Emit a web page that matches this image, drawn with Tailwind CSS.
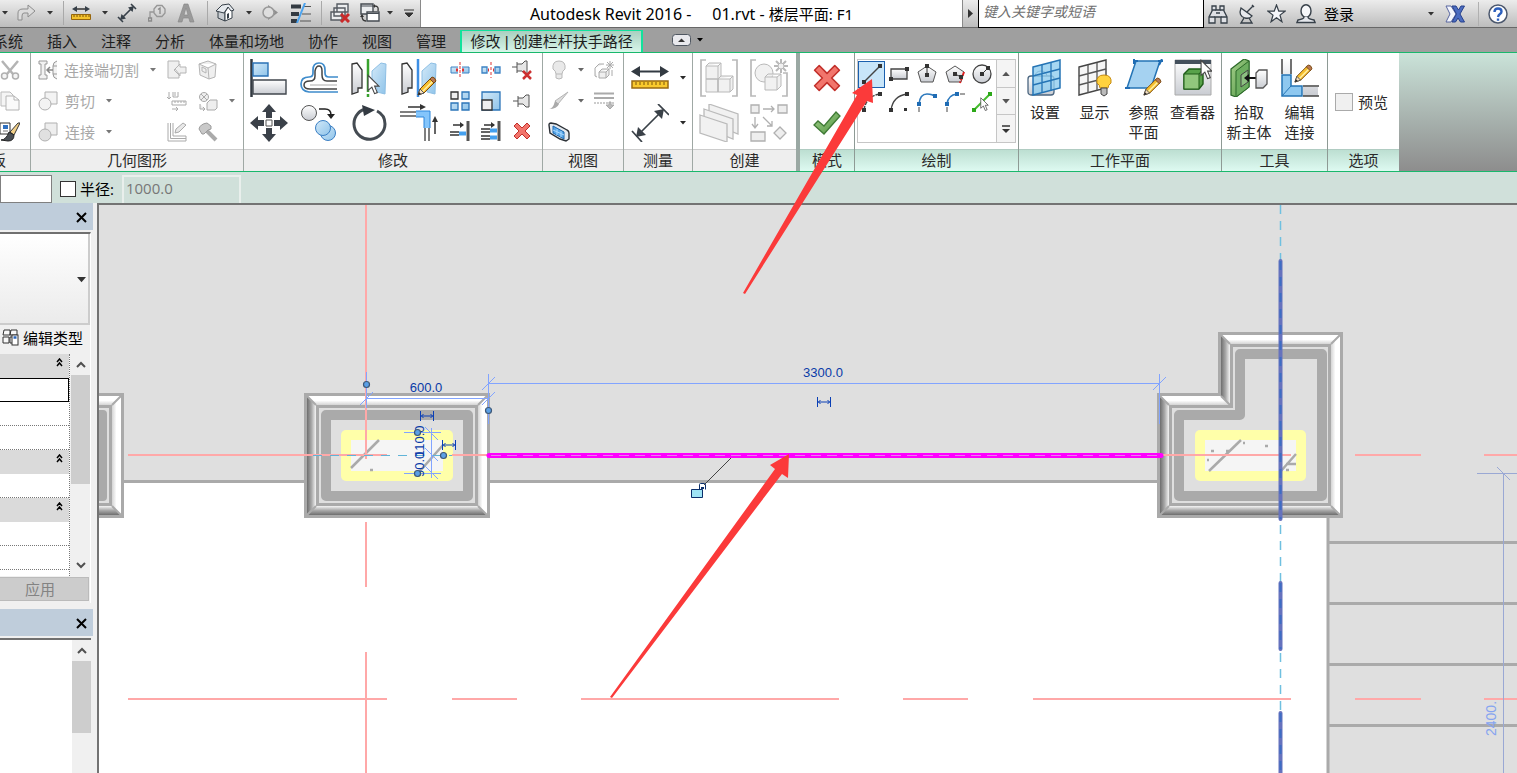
<!DOCTYPE html>
<html lang="zh-CN">
<head>
<meta charset="utf-8">
<title>Autodesk Revit 2016</title>
<script src="https://cdn.jsdelivr.net/npm/@tailwindcss/browser@4"></script>
</head>
<body class="relative flex h-screen flex-col overflow-hidden bg-[#f0f0f0] text-[15px] leading-5 text-[#1e1e1e] font-['Open_Sans','Noto_Sans_CJK_SC',sans-serif]">
<svg class="absolute size-0" aria-hidden="true">
  <defs>
    <linearGradient id="metal" x1="0" y1="0" x2="0" y2="1"><stop offset="0" stop-color="#fff"/><stop offset="1" stop-color="#c9ccd2"/></linearGradient>
    <linearGradient id="blue" x1="0" y1="0" x2="1" y2="1"><stop offset="0" stop-color="#d3e9f8"/><stop offset="1" stop-color="#8fc4ea"/></linearGradient>
    <linearGradient id="green" x1="0" y1="0" x2="1" y2="1"><stop offset="0" stop-color="#a5d08c"/><stop offset="1" stop-color="#4f9440"/></linearGradient>
    <linearGradient id="bl" x1="0" x2="1"><stop offset="0" stop-color="#6e6e6e"/><stop offset=".5" stop-color="#a8a8a8"/><stop offset="1" stop-color="#f4f4f4"/></linearGradient>
    <linearGradient id="bb" x1="0" y1="0" x2="0" y2="1"><stop offset="0" stop-color="#f4f4f4"/><stop offset=".5" stop-color="#a8a8a8"/><stop offset="1" stop-color="#6e6e6e"/></linearGradient>
    <linearGradient id="bt" x1="0" y1="0" x2="0" y2="1"><stop offset="0" stop-color="#fff"/><stop offset=".5" stop-color="#fff"/><stop offset="1" stop-color="#d4d4d4"/></linearGradient>
    <linearGradient id="br" x1="1" x2="0"><stop offset="0" stop-color="#fff"/><stop offset=".5" stop-color="#fff"/><stop offset="1" stop-color="#d4d4d4"/></linearGradient>
    <symbol id="caret" viewBox="0 0 6 4"><path d="M0 0h6L3 3.5z" fill="currentColor"/></symbol>
    <symbol id="pencil" viewBox="0 0 20 20"><path d="M1 19l2-6L14 2l4 4L7 17z" fill="#f7c02f" stroke="#7a4a10"/><path d="M5.500 15.500L16.500 4.500" stroke="#fff0a8" stroke-width="1.500"/><path d="M13 3l2-2q3 0 4 4l-2 2z" fill="#b87855" stroke="#7a4a10"/><path d="M1 19l2-6 4 4z" fill="#f5dfc0" stroke="#555"/><path d="M1 19l1-3 2 2z" fill="#222"/></symbol>
    <symbol id="cursor" viewBox="0 0 12 20"><path d="M1 1v14l3.500-3 2.500 6 2.500-1-2.500-6H11z" fill="#fff" stroke="#444"/></symbol>
    <symbol id="cross" viewBox="0 0 18 18"><path d="M4 1l5 5 5-5 3 3-5 5 5 5-3 3-5-5-5 5-3-3 5-5-5-5z" fill="#f2756c" stroke="#c22f2a" stroke-linejoin="round"/></symbol>
    <symbol id="flip" viewBox="0 0 14 10"><path d="M.5 0v10M13.500 0v10M1 5h12M3.500 3L1.500 5l2 2M10.500 3l2 2-2 2" fill="none" stroke="#0a3fb5"/></symbol>
  </defs>
</svg>

<!-- Title bar with quick access tools -->
<header class="flex h-7 shrink-0 border-b border-[#686868] bg-linear-to-b from-[#ececec] to-[#bdbdbd]">
  <div class="flex w-[421px] shrink-0 items-center border-r border-[#8a8a8a] pb-0.5 text-[#333]" role="toolbar" aria-label="快速访问工具栏">
    <button class="flex w-[10px] justify-center" aria-label="撤消列表"><svg class="h-1 w-1.5"><use href="#caret"/></svg></button>
    <button class="flex w-[34px] justify-center" aria-label="重做"><svg width="20" height="18" viewBox="0 0 20 18"><path d="M1 16V9q0-4 5-4h5V1l7 6-7 6V9H7q-2 0-2 3v4z" fill="#dcdcdc" stroke="#8d8d8d"/></svg></button>
    <button class="flex w-3 justify-center" aria-label="重做列表"><svg class="h-1 w-1.5"><use href="#caret"/></svg></button>
    <span class="h-6 w-2 border-r border-[#a9a9a9]"></span>
    <button class="flex w-[34px] justify-center" aria-label="测量"><svg width="20" height="16" viewBox="0 0 20 16"><path d="M4 4h12" stroke="#333" stroke-width="1.500"/><path d="M1 4l5-3v6zM19 4l-5-3v6z" fill="#374049"/><path d="M.5 9.500h19v5H.5z" fill="#f4c22c" stroke="#97660c"/><path d="M3 10v2M6 10v2M9 10v2M12 10v2M15 10v2M18 10v2" stroke="#7a5208"/></svg></button>
    <button class="flex w-[14px] justify-center" aria-label="测量列表"><svg class="h-1 w-1.5"><use href="#caret"/></svg></button>
    <button class="flex w-[30px] justify-center" aria-label="对齐尺寸标注"><svg width="20" height="20" viewBox="0 0 20 20"><path d="M5 15L15 5M1 14l5 5M14 1l5 5" stroke="#374049" stroke-width="1.600"/><path d="M3 17l1.500-6 4.500 4.500zM17 3l-1.500 6L11 4.500z" fill="#374049"/></svg></button>
    <button class="flex w-[30px] justify-center" aria-label="按类别标记"><svg width="18" height="18" viewBox="0 0 18 18"><path d="M6 5l3-3.500h5L17 5v4l-3 3.500H9L6 9zM6 8H2v6" fill="none" stroke="#979797" stroke-width="1.300"/><path d="M.5 14h3v3h-3zM10 5.500L12 4v6" fill="none" stroke="#8a8a8a" stroke-width="1.300"/></svg></button>
    <button class="flex w-7 justify-center" aria-label="文字"><svg width="18" height="20" viewBox="0 0 18 20"><path d="M1 19L7 1h4l6 18h-4l-1.200-4H6.200L5 19zM7 12h4L9 5z" fill="#9a9a9a" stroke="#858585" stroke-width=".6"/></svg></button>
    <span class="h-6 w-2 border-r border-[#a9a9a9]"></span>
    <button class="flex w-[34px] justify-center" aria-label="默认三维视图"><svg width="20" height="19" viewBox="0 0 20 19"><path d="M3 8v7l7 3V9z" fill="#c9ced3" stroke="#374049"/><path d="M10 9v9l7-3V7l-3-4z" fill="#fff" stroke="#374049"/><path d="M1 8l6-6 7-1 5 6-3 1-3-4-4 6z" fill="#e6eaee" stroke="#374049"/><path d="M12 11l2-1v5l-2 1z" fill="#374049"/></svg></button>
    <button class="flex w-[14px] justify-center" aria-label="三维视图列表"><svg class="h-1 w-1.5"><use href="#caret"/></svg></button>
    <button class="flex w-7 justify-center" aria-label="剖面"><svg width="18" height="17" viewBox="0 0 18 17"><path d="M7 1l10 7.500L7 16z" fill="#8f8f8f"/><circle cx="7.500" cy="8.500" r="5.500" fill="#dedede" stroke="#999" stroke-width="1.500"/></svg></button>
    <button class="flex w-[34px] justify-center" aria-label="细线"><svg width="20" height="20" viewBox="0 0 20 20"><path d="M0 3.500h10M0 11h8M0 18h6" stroke="#333a42" stroke-width="4"/><path d="M13 3.500h7M11 11h9M9 18h11" stroke="#555" stroke-width="1.200"/><path d="M14 0L6 20" stroke="#4ba3ef" stroke-width="2"/></svg></button>
    <span class="h-6 w-1 border-r border-[#a9a9a9]"></span>
    <button class="flex w-9 justify-center" aria-label="关闭隐藏窗口"><svg width="20" height="20" viewBox="0 0 20 20"><path d="M7 1h11v8H7zM4 5h11v8H4zM1 9h11v8H1z" fill="#eceef0" stroke="#555b62" stroke-width="1.400"/><path d="M11 11l8 8M19 11l-8 8" stroke="#c92a2a" stroke-width="3"/></svg></button>
    <button class="flex w-6 justify-center" aria-label="切换窗口"><svg width="20" height="20" viewBox="0 0 20 20"><path d="M1 1h12v10H1z" fill="#eceef0" stroke="#454b52" stroke-width="1.400"/><path d="M7 9h12v9H7z" fill="#fff" stroke="#454b52" stroke-width="1.400"/><path d="M1 3h12M7 10.500h12" stroke="#454b52"/><path d="M15 3q4 0 3 5M2 13q0 5 4 5" fill="none" stroke="#333" stroke-width="1.300"/><path d="M15 1v4l-2-2zM0 14l2-3 2 3z" fill="#333"/></svg></button>
    <button class="flex w-4 justify-center" aria-label="窗口列表"><svg class="h-1 w-1.5"><use href="#caret"/></svg></button>
    <button class="flex w-[22px] justify-center" aria-label="自定义快速访问工具栏"><svg width="10" height="8" viewBox="0 0 10 8"><path d="M0 1h10M1 4h8L5 8z" fill="#333" stroke="#333"/></svg></button>
  </div>
  <h1 class="flex flex-1 items-center justify-center bg-white text-[16px] whitespace-pre text-black"><span class="font-['Noto_Sans','Noto_Sans_CJK_SC',sans-serif]">Autodesk Revit 2016 -     01.rvt - <span class="text-[15px]">楼层平面: F1</span></span></h1>
  <div class="flex w-[555px] shrink-0 items-center border-l border-[#8a8a8a]">
    <button class="flex w-[15px] justify-center" aria-label="展开搜索"><svg width="5" height="9"><path d="M0 0v9l5-4.500z" fill="#333"/></svg></button>
    <input type="text" aria-label="搜索" placeholder="键入关键字或短语" class="h-7 w-[226px] border-x border-b border-black bg-white px-1 pb-1 text-[14px] italic outline-none placeholder:text-[#707070]">
    <button class="flex w-7 justify-center" aria-label="搜索"><svg width="20" height="20" viewBox="0 0 20 20"><path d="M4 2h4v4h4V2h4v5l3 6v6h-6v-6H7v6H1v-6l3-6z" fill="#dfe1e6" stroke="#374049" stroke-width="1.300"/><path d="M1 13h6M13 13h6M4 6h4M12 6h4M8 9h4" stroke="#374049" stroke-width="1.300"/></svg></button>
    <button class="flex w-[30px] justify-center" aria-label="通讯中心"><svg width="18" height="20" viewBox="0 0 18 20"><path d="M3 4q-3 8 4 10 5 1 7-2z" fill="#e8eaee" stroke="#374049" stroke-width="1.300"/><path d="M9 8l6-6M6 14l-3 5h11l-3-5M14 1l2 2" fill="none" stroke="#374049" stroke-width="1.400"/></svg></button>
    <button class="flex w-7 justify-center" aria-label="收藏夹"><svg width="19" height="19" viewBox="0 0 20 20"><path d="M10 1l2.400 6.500H19l-5.300 4.200 2 7L10 14.600 4.300 18.700l2-7L1 7.500h6.600z" fill="#f5f6fa" stroke="#374049" stroke-width="1.300"/></svg></button>
    <button class="flex items-center gap-2 pl-1.5 text-black"><svg width="20" height="20" viewBox="0 0 20 20"><ellipse cx="10" cy="7" rx="5" ry="6.300" fill="#f7f8fa" stroke="#374049" stroke-width="1.400"/><path d="M8 13q0 2-6 3l-1 2.500h18L18 16q-6-1-6-3" fill="#e5e7ec" stroke="#374049" stroke-width="1.400"/></svg><span>登录</span></button>
    <button class="ml-auto flex w-4 justify-center text-[#333]" aria-label="登录列表"><svg class="h-1 w-1.5"><use href="#caret"/></svg></button>
    <button class="flex w-8 justify-center" aria-label="Exchange 应用商店"><svg width="20" height="18" viewBox="0 0 20 18"><path d="M1 1h5l5 8-5 8H1l4-8z" fill="#f4f6fc" stroke="#5966a0"/><path d="M7 1h4l2.500 4L16 1h3.500l-4.500 8 4.500 8h-4l-2.500-4-2.500 4H7l4.500-8z" fill="#4b6cc0" stroke="#27408c"/></svg></button>
    <span class="ml-[7px] h-6 w-px bg-[#b0b0b0]"></span>
    <button class="flex w-[38px] justify-center" aria-label="帮助"><svg width="20" height="20" viewBox="0 0 20 20"><circle cx="10" cy="10" r="9" fill="#fff" stroke="#4c586e" stroke-width="1.500"/><path d="M6.500 8q0-3.500 3.500-3.500T13.500 7.500Q13.500 9 12 10t-2 3M10 14.500v2.200" fill="none" stroke="#2c5fbd" stroke-width="2.400"/></svg></button>
  </div>
</header>

<!-- Ribbon tabs -->
<nav class="flex h-[25px] shrink-0 items-end border-b border-[#19b86c] bg-[#9f9f9f]" aria-label="功能区选项卡">
  <div class="-ml-[19px] flex shrink-0 items-center">
    <button class="h-[22px] px-3 whitespace-nowrap">系统</button><button class="h-[22px] px-3 whitespace-nowrap">插入</button><button class="h-[22px] px-3 whitespace-nowrap">注释</button><button class="h-[22px] px-3 whitespace-nowrap">分析</button><button class="h-[22px] px-3 whitespace-nowrap">体量和场地</button><button class="h-[22px] px-3 whitespace-nowrap">协作</button><button class="h-[22px] px-3 whitespace-nowrap">视图</button><button class="h-[22px] px-3 whitespace-nowrap">管理</button>
  </div>
  <button class="ml-0.5 h-[22px] w-[183px] shrink-0 border-x-2 border-t border-[#12e29c] bg-linear-to-b from-[#a9cfc0] to-[#d8f6ea] whitespace-nowrap font-['Liberation_Sans','Noto_Sans_CJK_SC',sans-serif]">修改 | 创建栏杆扶手路径</button>
  <button class="mb-1.5 ml-[29px] flex items-center gap-1.5 text-black" aria-label="最小化功能区"><svg width="19" height="12" viewBox="0 0 19 12"><rect x=".5" y=".5" width="18" height="11" rx="3" fill="#e9e9ed" stroke="#4f5660"/><path d="M6 8h7L9.500 4.500z" fill="#333"/></svg><svg class="h-1 w-1.5"><use href="#caret"/></svg></button>
</nav>

<!-- Ribbon -->
<div class="flex h-[119px] shrink-0 border-b border-[#19b86c] bg-linear-to-b from-[#cae3d9] to-[#8d8d8d] text-[#2a2a2a]">
  <section class="flex w-[31px] shrink-0 flex-col border-r border-[#9fa8a4] bg-white" aria-label="剪贴板">
    <div class="grid h-24 grid-cols-[20px] grid-rows-[31px_31px_31px] place-items-center pt-px">
      <button aria-label="剪切"><svg width="20" height="20" viewBox="0 0 20 20"><path d="M2 1l11 13M18 1L7 14" stroke="#b4b4b4" stroke-width="2.500"/><circle cx="4.500" cy="16" r="3" fill="#f4f4f4" stroke="#b0b0b0" stroke-width="1.500"/><circle cx="15.500" cy="16" r="3" fill="#f4f4f4" stroke="#b0b0b0" stroke-width="1.500"/></svg></button>
      <button aria-label="复制"><svg width="20" height="20" viewBox="0 0 20 20"><path d="M1 1h9l3 3v11H1z" fill="#f5f5f5" stroke="#bbb"/><path d="M6 5h8l5 4v10H6zM14 5v4h5" fill="#fafafa" stroke="#b4b4b4"/></svg></button>
      <button aria-label="匹配类型属性"><svg width="20" height="20" viewBox="0 0 20 20"><path d="M0 1h10v11H0z" fill="#fff" stroke="#333"/><path d="M3 3h5v4H3z" fill="#2f70c0"/><path d="M3 9h5" stroke="#777"/><path d="M20 1l-6 12-4-3 8-9z" fill="#f3d18a" stroke="#333"/><path d="M1 18q5 0 8-8l5 3q0 6-6 6z" fill="#4a4f55" stroke="#222"/></svg></button>
    </div>
    <h2 class="flex h-[22px] justify-end overflow-hidden border-t border-[#ccc] bg-[#eee] pr-[24px] whitespace-nowrap">剪贴板</h2>
  </section>

  <section class="flex w-[213px] shrink-0 flex-col border-r border-[#9fa8a4] bg-white" aria-label="几何图形">
    <div class="grid h-24 grid-cols-[34px_79px_17px_32px_30px_17px] grid-rows-[31px_31px_31px] items-center justify-items-center pt-px text-[#a8a8a8]">
      <svg width="20" height="20" viewBox="0 0 20 20" fill="#f2f2f2" stroke="#999"><path d="M1 1h8v3H7v11h2v4H1v-4h2V4H1zM19 1q-4 1-4 5v8q0 4 4 5M15 6h4M15 14h4"/><path d="M9 10h6M12 7l-3 3 3 3" fill="none" stroke="#888" stroke-width="1.500"/></svg>
      <button class="-ml-px justify-self-start whitespace-nowrap">连接端切割</button>
      <button class="justify-self-start text-[#777]" aria-label="连接端切割列表"><svg class="ml-1.5 h-1 w-1.5"><use href="#caret"/></svg></button>
      <button aria-label="端部"><svg width="20" height="20" viewBox="0 0 20 20" fill="#efefef" stroke="#b5b5b5"><path d="M1 1h11v4l-4 4 4 5v4H1zM19 7h-6V4L7 10l6 6v-3h6z"/></svg></button>
      <button aria-label="面"><svg width="20" height="20" viewBox="0 0 20 20" fill="#efefef" stroke="#b5b5b5"><path d="M1 4l9-3 8 3-1 13-6 2L2 15zM1 4l9 4 8-4M10 8l1 11M4 7l4 2v4l-4-2z"/></svg></button>
      <span></span>
      <svg width="20" height="20" viewBox="0 0 20 20" fill="#f3f3f3" stroke="#b0b0b0"><path d="M7 1h12v12H7z"/><circle cx="7" cy="13" r="6"/></svg>
      <button class="flex w-full items-center gap-[11px] text-left">剪切<svg class="h-1 w-1.5 text-[#777]"><use href="#caret"/></svg></button><span></span>
      <button aria-label="屋顶连接"><svg width="20" height="20" viewBox="0 0 20 20" fill="none" stroke="#aaa"><path d="M2 1v7M0 6l2 2 2-2M6 1v5h5V1M8 1v4M5 10h14v4H5zM8 10v2M11 10v2M14 10v2M17 10v2M5 18h6M9 16l2 2-2 2"/></svg></button>
      <button aria-label="拆分面"><svg width="20" height="20" viewBox="0 0 20 20" fill="#eee" stroke="#aaa"><circle cx="6" cy="6" r="4.500"/><path d="M3 3l6 6M9 3L3 9M9 12l3-3h7v8l-2 2H9zM2 13v5h5M5 16l2 2-2 2"/></svg></button>
      <button class="text-[#777]" aria-label="拆分面列表"><svg class="h-1 w-1.5"><use href="#caret"/></svg></button>
      <svg width="20" height="20" viewBox="0 0 20 20" fill="#eee" stroke="#b0b0b0"><path d="M7 1h12v12H7z"/><circle cx="7" cy="13" r="6" fill="#e0e0e0"/></svg>
      <button class="flex w-full items-center gap-[11px] text-left">连接<svg class="h-1 w-1.5 text-[#777]"><use href="#caret"/></svg></button><span></span>
      <button aria-label="梁连接"><svg width="20" height="20" viewBox="0 0 20 20" fill="none" stroke="#aaa"><path d="M1 1v18h18v-5H6V1M3.500 1v15.500H19"/><path d="M8 11l1-4 7-6 3 2-7 7z" fill="#e8e8e8"/></svg></button>
      <button aria-label="拆除"><svg width="20" height="20" viewBox="0 0 20 20"><path d="M9 9l9 9" stroke="#aaa" stroke-width="4"/><path d="M1 7q1-5 8-6l4 3v3l-3 1-4 4H4z" fill="#c9c9c9" stroke="#9b9b9b"/></svg></button>
    </div>
    <h2 class="h-[22px] border-t border-[#ccc] bg-[#eee] text-center">几何图形</h2>
  </section>

  <section class="flex w-[299px] shrink-0 flex-col border-r border-[#9fa8a4] bg-white" aria-label="修改">
    <div class="flex h-24 pt-0.5">
      <div class="grid w-[200px] grid-cols-4 grid-rows-[45px_45px] place-items-center">
        <button aria-label="对齐"><svg width="38" height="38" viewBox="0 0 38 38"><path d="M1.500 0v38" stroke="#333a42" stroke-width="2.500"/><path d="M3 4h15v13H3z" fill="url(#blue)" stroke="#2b72b5" stroke-width="1.400"/><path d="M3 21h33v14H3z" fill="url(#metal)" stroke="#41474e" stroke-width="1.400"/></svg></button>
        <button aria-label="偏移"><svg width="38" height="38" viewBox="0 0 38 38" fill="none"><path d="M38 18h-9q-4 0-4-4v-3q0-7-6-7t-6 7v3q0 4-4 4-8 0-8 7t8 8h29" stroke="#3f8ccc" stroke-width="1.700"/><path d="M37 22H27q-5 0-5-6v-4q0-5-3-5t-4 5v5q0 5-5 5-6 0-6 4t6 4h27" stroke="#444" stroke-width="1.500"/><path d="M37 26H10" stroke="#aaa"/></svg></button>
        <button aria-label="镜像 - 拾取轴"><svg width="38" height="38" viewBox="0 0 38 38"><path d="M2 5l5-1 5 7v18H8v4l-6 2z" fill="url(#metal)" stroke="#333" stroke-width="1.300"/><path d="M36 5l-5-1-9 8v17h5v4l8 2z" fill="url(#blue)" stroke="#8ebfe4"/><path d="M18 0v33M18 35v3" stroke="#38a32e" stroke-width="2.500"/><use href="#cursor" x="17" y="15" width="13" height="22"/></svg></button>
        <button aria-label="镜像 - 绘制轴"><svg width="38" height="38" viewBox="0 0 38 38"><path d="M2 5l5-1 5 7v18H8v4l-6 2z" fill="url(#metal)" stroke="#333" stroke-width="1.300"/><path d="M36 5l-5-1-9 8v17h5v4l8 2z" fill="url(#blue)" stroke="#8ebfe4"/><path d="M18 0v38" stroke="#3e8fe4" stroke-width="2.500"/><use href="#pencil" x="17" y="17" width="20" height="20"/></svg></button>
        <button aria-label="移动"><svg width="38" height="38" viewBox="0 0 38 38"><path d="M19 0l7 8h-4v6h-6V8h-4zM19 38l7-8h-4v-6h-6v6h-4zM0 19l8-7v4h6v6H8v4zM38 19l-8-7v4h-6v6h6v4z" fill="#3b4149"/><path d="M16 16h6v6h-6z" fill="#fff" stroke="#555"/></svg></button>
        <button aria-label="复制"><svg width="38" height="38" viewBox="0 0 38 38"><circle cx="9" cy="9" r="7.500" fill="url(#metal)" stroke="#555"/><path d="M19 5h6q6 0 6 6" fill="none" stroke="#222" stroke-width="1.500"/><path d="M27 10h8l-4 5z" fill="#222"/><circle cx="28" cy="29" r="7.500" fill="url(#blue)" stroke="#3b7fc4"/><circle cx="23" cy="24" r="7.500" fill="url(#blue)" stroke="#3b7fc4"/></svg></button>
        <button aria-label="旋转"><svg width="38" height="38" viewBox="0 0 38 38"><path d="M27 7q8 4 8 13a15.500 15.500 0 1 1-20-15" fill="none" stroke="#444b52" stroke-width="3"/><path d="M12 1l13 5-11 6z" fill="#333a42"/></svg></button>
        <button aria-label="修剪/延伸为角"><svg width="38" height="38" viewBox="0 0 38 38" fill="none"><path d="M0 8h16M0 12h16M25 23v14M29 23v14" stroke="#555" stroke-width="1.500"/><path d="M16 10h11v14" stroke="#84c5fb" stroke-width="6"/><path d="M16 7h14v17M16 13h8v11" stroke="#2b86dc"/><path d="M8 3h14M35 30V16" stroke="#333" stroke-width="1.500"/><path d="M20 0l6 3-6 3zM32 18l3-6 3 6z" fill="#333"/></svg></button>
      </div>
      <div class="grid w-[94px] grid-cols-3 grid-rows-[30px_31px_30px] place-items-center">
        <button aria-label="拆分图元"><svg width="20" height="16" viewBox="0 0 20 16"><path d="M1 5h18v6H1z" fill="url(#blue)" stroke="#3c82c4"/><path d="M8 0h4v16H8z" fill="#fff"/><path d="M10 0v16" stroke="#d33" stroke-dasharray="3 1"/><path d="M6 8h2M12 8h2" stroke="#d33" stroke-width="3"/></svg></button>
        <button aria-label="用间隙拆分"><svg width="20" height="16" viewBox="0 0 20 16"><path d="M1 5h5v6H1zM14 5h5v6h-5z" fill="url(#blue)" stroke="#3c82c4" stroke-width="1.300"/><path d="M10 0v16" stroke="#d33" stroke-dasharray="3 2"/><path d="M7 8h1M12 8h1" stroke="#d33" stroke-width="3"/></svg></button>
        <button aria-label="解锁"><svg width="20" height="20" viewBox="0 0 20 20"><path d="M0 7h5M5 2v11M5 4h5l3-3h2v13h-2l-3-3H5" fill="#e6e6e6" stroke="#555"/><path d="M11 11l8 8M19 11l-8 8" stroke="#cc2f2f" stroke-width="2.500"/></svg></button>
        <button aria-label="阵列"><svg width="20" height="20" viewBox="0 0 20 20"><path d="M1 1h7v7H1z" fill="#eee" stroke="#333" stroke-width="1.300"/><path d="M12 1h7v7h-7zM1 12h7v7H1zM12 12h7v7h-7z" fill="url(#blue)" stroke="#2d76b9" stroke-width="1.300"/></svg></button>
        <button aria-label="缩放"><svg width="20" height="20" viewBox="0 0 20 20"><path d="M1 1h18v18H1z" fill="url(#blue)" stroke="#2d76b9" stroke-width="1.300"/><path d="M1 9h10v10H1z" fill="#eee" stroke="#333" stroke-width="1.300"/></svg></button>
        <button aria-label="锁定"><svg width="18" height="14" viewBox="0 0 18 14"><path d="M0 7h5M5 2v11M5 4h5l3-3h3v12h-3l-3-3H5" fill="#e6e6e6" stroke="#555"/></svg></button>
        <button aria-label="修剪/延伸单个图元"><svg width="20" height="20" viewBox="0 0 20 20" fill="none"><path d="M3 4h10M0 11h9M0 14h9" stroke="#333" stroke-width="1.300"/><path d="M10 1l4 3-4 3z" fill="#333"/><path d="M9 12.500h7" stroke="#44a0ef" stroke-width="4"/><path d="M18 0v20" stroke="#555" stroke-width="3"/></svg></button>
        <button aria-label="修剪/延伸多个图元"><svg width="20" height="20" viewBox="0 0 20 20" fill="none"><path d="M3 4h10M0 8h9M0 11h9M0 15h9M0 18h9" stroke="#333" stroke-width="1.300"/><path d="M10 1l4 3-4 3z" fill="#333"/><path d="M9 9.500h7M9 16.500h7" stroke="#44a0ef" stroke-width="4"/><path d="M18 0v20" stroke="#555" stroke-width="3"/></svg></button>
        <button aria-label="删除"><svg class="size-[18px]"><use href="#cross"/></svg></button>
      </div>
    </div>
    <h2 class="h-[22px] border-t border-[#ccc] bg-[#eee] text-center">修改</h2>
  </section>

  <section class="flex w-[81px] shrink-0 flex-col border-r border-[#9fa8a4] bg-white" aria-label="视图">
    <div class="grid h-24 grid-cols-[32px_12px_34px] grid-rows-[31px_31px_31px] place-items-center pt-px text-[#666]">
      <button aria-label="在视图中隐藏"><svg width="16" height="20" viewBox="0 0 16 20"><path d="M5 14q0-3-3-5-1-8 6-8t6 8q-3 2-3 5zM5 14v4l3 1 3-1v-4" fill="#e9e9e9" stroke="#b9b9b9"/></svg></button>
      <button aria-label="隐藏列表"><svg class="h-1 w-1.5"><use href="#caret"/></svg></button>
      <button aria-label="替换视图中的图形"><svg width="20" height="20" viewBox="0 0 20 20" fill="#efefef" stroke="#aaa"><path d="M5 12l3-3h7v6l-3 3H5zM5 12h7l3-3M12 12v6M1 8v8l2 1M1 8l4-4h5M18 10v6"/><path d="M16 1v8M12 5h8M13 2l6 6M19 2l-6 6"/></svg></button>
      <button aria-label="替换"><svg width="20" height="19" viewBox="0 0 20 19"><path d="M19 1L9 13l-3-3z" fill="#ddd" stroke="#b5b5b5"/><path d="M0 18q4 0 6-8l4 3q-2 5-10 5z" fill="#aaa"/></svg></button>
      <button aria-label="替换列表"><svg class="h-1 w-1.5"><use href="#caret"/></svg></button>
      <button aria-label="线处理"><svg width="20" height="18" viewBox="0 0 20 18"><path d="M0 1.500h20M0 6h20" stroke="#aaa" stroke-width="2"/><path d="M0 11h20" stroke="#999" stroke-dasharray="2 1"/><path d="M15 10h2v3h3l-4 4-4-4h3z" fill="#bbb" stroke="#aaa"/></svg></button>
      <button aria-label="选择框"><svg width="22" height="20" viewBox="0 0 22 20"><path d="M1 3q0-2 2-2l5 1 11 6q2 1 2 3v6l-3 2-6-2L2 11z" fill="#e3e9ef" stroke="#2a2f35" stroke-width="1.400"/><path d="M5 4l11 6v7L5 11z" fill="#55a7ea" stroke="#1e66ad"/><path d="M9 7v6M13 9v6M5 8l11 5" stroke="#aad8ff"/></svg></button>
    </div>
    <h2 class="h-[22px] border-t border-[#ccc] bg-[#eee] text-center">视图</h2>
  </section>

  <section class="flex w-[69px] shrink-0 flex-col border-r border-[#9fa8a4] bg-white" aria-label="测量">
    <div class="grid h-24 grid-cols-[51px_15px] grid-rows-[45px_45px] place-items-center pt-0.5">
      <button aria-label="测量两个参照之间的距离"><svg width="38" height="24" viewBox="0 0 38 24"><path d="M4 5.500h30" stroke="#333a42" stroke-width="2"/><path d="M0 5.500L9 0v11zM38 5.500L29 0v11z" fill="#333a42"/><path d="M1 15h36v7H1z" fill="#fac92d" stroke="#9a6a10" stroke-width="1.500"/><path d="M5 16v3M9 16v3M13 16v3M17 16v3M21 16v3M25 16v3M29 16v3M33 16v3" stroke="#7d560d"/></svg></button>
      <button aria-label="测量列表"><svg class="h-1 w-1.5"><use href="#caret"/></svg></button>
      <button aria-label="对齐尺寸标注"><svg width="38" height="38" viewBox="0 0 38 38"><path d="M8 30L30 8M1 27l10 11M27 0l11 11" stroke="#3a4148" stroke-width="1.700"/><path d="M5 33l2-10 8 8zM33 5l-2 10-8-8z" fill="#3a4148"/></svg></button>
      <button aria-label="尺寸标注列表"><svg class="h-1 w-1.5"><use href="#caret"/></svg></button>
    </div>
    <h2 class="h-[22px] border-t border-[#ccc] bg-[#eee] text-center">测量</h2>
  </section>

  <section class="flex w-[107px] shrink-0 flex-col border-r-4 border-[#9aa8a3] bg-white" aria-label="创建">
    <div class="grid h-24 grid-cols-[52px_48px] grid-rows-[45px_45px] place-items-center pt-0.5">
      <button aria-label="创建组"><svg width="38" height="38" viewBox="0 0 38 38" fill="#f1f1f1" stroke="#b9b9b9"><path d="M6 1H1v36h5M32 1h5v36h-5" fill="none" stroke-width="1.700"/><path d="M6 7l3-3h12v13l-3 3H6zM6 20h12v13H6zM18 20l3-3h12v13l-3 3H18zM6 7h12l3-3M18 7v26M18 20h12l3-3M30 20v13"/></svg></button>
      <button aria-label="创建类似实例"><svg width="38" height="38" viewBox="0 0 38 38" fill="#f1f1f1" stroke="#b9b9b9"><path d="M6 1H1v36h5M33 14h4v23h-5" fill="none" stroke-width="1.700"/><circle cx="14" cy="14" r="9"/><path d="M15 18l3-3h13v12l-4 4H15zM15 18h12l4-3M27 18v13"/><path d="M31 0v14M24 7h14M26 2l10 10M36 2L26 12" stroke-width="2"/><circle cx="31" cy="7" r="3"/></svg></button>
      <button aria-label="创建部件"><svg width="40" height="38" viewBox="0 0 40 38" fill="#f1f1f1" stroke="#bbb" stroke-width="1.300"><path d="M10 0l29 10v20L10 18z"/><path d="M5 5l29 10v20L5 23z"/><path d="M1 11l27 9v18L1 29z"/></svg></button>
      <button aria-label="创建零件"><svg width="38" height="38" viewBox="0 0 38 38" fill="#eee" stroke="#b0b0b0" stroke-width="1.300"><path d="M1 1h8v8H1zM28 1h9v8h-9zM1 28h14v9H1zM30 23l6 6-6 6-6-6z"/><path d="M13 5h11M21 2l3 3-3 3M5 13v10M2 20l3 4 3-4M13 13l9 9M22 17v5h-5" fill="none"/></svg></button>
    </div>
    <h2 class="h-[22px] border-t border-[#ccc] bg-[#eee] text-center">创建</h2>
  </section>

  <section class="flex w-[55px] shrink-0 flex-col border-r border-[#8e9a95] bg-white" aria-label="模式">
    <div class="grid h-24 grid-rows-[45px_45px] place-items-center pt-0.5">
      <button aria-label="取消编辑模式"><svg class="size-7"><use href="#cross"/></svg></button>
      <button aria-label="完成编辑模式"><svg width="28" height="24" viewBox="0 0 28 24"><path d="M1 14l4-4 6 5L23 1l4 4-16 18z" fill="url(#green)" stroke="#3f7a35" stroke-width="1.300"/></svg></button>
    </div>
    <h2 class="h-[22px] border-t border-[#b0ccc2] bg-linear-to-b from-[#bddfd2] to-[#defaf1] text-center">模式</h2>
  </section>

  <section class="flex w-[164px] shrink-0 flex-col border-r border-[#8e9a95] bg-white" aria-label="绘制">
    <div class="h-24 px-0.5 pt-1.5">
      <div class="flex h-[84px] border border-[#c6c6c6]">
        <div class="grid flex-1 grid-cols-5 grid-rows-[28px_28px] place-items-center">
          <button class="grid size-[27px] place-items-center border border-[#1a5fae] bg-[#c8e5f9]" aria-label="直线"><svg width="20" height="20" viewBox="0 0 20 20"><path d="M2 18L18 2" stroke="#444" stroke-width="1.500"/><path d="M0 16h4v4H0zM16 0h4v4h-4z" fill="#333"/></svg></button>
          <button aria-label="矩形"><svg width="20" height="16" viewBox="0 0 20 16"><path d="M2 3h16v10H2z" fill="url(#metal)" stroke="#444" stroke-width="1.300"/><path d="M0 11h4v4H0zM16 1h4v4h-4z" fill="#333"/></svg></button>
          <button aria-label="内接多边形"><svg width="20" height="20" viewBox="0 0 20 20"><path d="M10 2l9 6-3 10H4L1 8z" fill="url(#metal)" stroke="#555"/><path d="M10 3v7" stroke="#333"/><path d="M8 0h4v4H8zM8 9h4v4H8z" fill="#333"/></svg></button>
          <button aria-label="外接多边形"><svg width="20" height="20" viewBox="0 0 20 20"><path d="M10 2l9 6-3 10H4L1 8z" fill="url(#metal)" stroke="#555"/><path d="M19 8l-4 11" stroke="#e02020" stroke-width="2" stroke-dasharray="4 1"/><path d="M10 10l6 3" stroke="#333"/><path d="M8 8h4v4H8zM14 11h4v4h-4z" fill="#333"/></svg></button>
          <button aria-label="圆形"><svg width="20" height="20" viewBox="0 0 20 20"><circle cx="10" cy="10" r="9" fill="url(#metal)" stroke="#444" stroke-width="1.300"/><path d="M10 10l5-5" stroke="#333"/><path d="M8 8h4v4H8zM14 2h4v4h-4z" fill="#333"/></svg></button>
          <button aria-label="起点-终点-半径弧"><svg width="20" height="20" viewBox="0 0 20 20"><path d="M2 18Q4 4 18 2" fill="none" stroke="#444" stroke-width="1.500" stroke-dasharray="4 1"/><path d="M0 16h4v4H0zM16 0h4v4h-4zM5 5h4v4H5z" fill="#333"/></svg></button>
          <button aria-label="圆心-端点弧"><svg width="20" height="20" viewBox="0 0 20 20"><path d="M2 18Q4 4 18 2" fill="none" stroke="#444" stroke-width="1.300"/><path d="M0 16h4v4H0zM16 0h4v4h-4zM15 16h3v3h-3z" fill="#333"/></svg></button>
          <button aria-label="相切-端点弧"><svg width="20" height="20" viewBox="0 0 20 20"><path d="M2 12Q3 2 10 2q6 0 8 3" fill="none" stroke="#2d79bd" stroke-width="1.600"/><path d="M0 10h4v4H0zM16 2h4v4h-4z" fill="#1f6cb4"/><path d="M2 15v5" stroke="#444"/></svg></button>
          <button aria-label="圆角弧"><svg width="20" height="20" viewBox="0 0 20 20"><path d="M2 12Q3 3 12 2" fill="none" stroke="#2d79bd" stroke-width="1.600"/><path d="M0 10h4v4H0zM10 0h4v4h-4z" fill="#1f6cb4"/><path d="M2 15v5M15 2h5" stroke="#444"/></svg></button>
          <button aria-label="拾取线"><svg width="20" height="20" viewBox="0 0 20 20"><path d="M2 18L18 2" stroke="#44bb2d" stroke-width="2"/><path d="M0 16h4v4H0zM16 0h4v4h-4z" fill="#2ca818"/><use href="#cursor" x="8" y="5" width="9" height="15"/></svg></button>
        </div>
        <div class="flex w-[19px] flex-col divide-y divide-[#c6c6c6] border-l border-[#c6c6c6] bg-[#f4f4f4] text-[#555]">
          <button class="grid flex-1 place-items-center" aria-label="向上"><svg class="h-[5px] w-2 rotate-180"><use href="#caret"/></svg></button>
          <button class="grid flex-1 place-items-center" aria-label="向下"><svg class="h-[5px] w-2"><use href="#caret"/></svg></button>
          <button class="grid flex-1 place-items-center" aria-label="展开"><svg width="8" height="8" viewBox="0 0 8 8"><path d="M0 1h8" stroke="#333" stroke-width="1.500"/><path d="M0 4h8L4 8z" fill="#333"/></svg></button>
        </div>
      </div>
    </div>
    <h2 class="h-[22px] border-t border-[#b0ccc2] bg-linear-to-b from-[#bddfd2] to-[#defaf1] text-center">绘制</h2>
  </section>

  <section class="flex w-[203px] shrink-0 flex-col border-r border-[#8e9a95] bg-white" aria-label="工作平面">
    <div class="grid h-24 grid-cols-[50px_49px_49px_49px] pt-1.5 pl-px">
      <button class="flex flex-col items-center gap-[5px]"><svg width="38" height="38" viewBox="0 0 38 38"><rect x="2" y="17" width="26" height="19" rx="3" fill="url(#metal)" stroke="#4b6680" stroke-width="1.300"/><path d="M9 17q1-5 6-5t6 5" fill="none" stroke="#4b6680"/><path d="M7 8l27-7v28L7 36z" fill="#90cdef" fill-opacity=".8" stroke="#2474b5" stroke-width="1.500"/><path d="M16 6v28M25 4v28M7 17l27-7M7 26l27-7" stroke="#2474b5" stroke-width="1.300"/></svg><span>设置</span></button>
      <button class="flex flex-col items-center gap-[5px]"><svg width="38" height="38" viewBox="0 0 38 38"><path d="M3 8l27-7v28L3 36z" fill="#f6f6f6" stroke="#444" stroke-width="1.400"/><path d="M12 6v28M21 4v28M3 17l27-7M3 26l27-7" stroke="#555" stroke-width="1.300"/><path d="M24 29q0-3-3-5-1-8 7-8t7 8q-3 2-3 5z" fill="#ffd23e" stroke="#c68b12"/><path d="M25 29h6v6l-3 2-3-2z" fill="#bbb" stroke="#444"/></svg><span>显示</span></button>
      <button class="flex flex-col items-center gap-[5px]"><svg width="38" height="38" viewBox="0 0 38 38"><path d="M11 2h24l-9 27H2z" fill="#a5d2f1" stroke="#2474b5" stroke-width="1.500"/><path d="M9 0v5M37 0l-3 6M0 29h5M9 2h4M33 2h5" stroke="#1f6cb4" stroke-width="2"/><use href="#pencil" x="18" y="18" width="19" height="19"/></svg><span>参照<br>平面</span></button>
      <button class="flex flex-col items-center gap-[5px]"><svg width="38" height="38" viewBox="0 0 38 38"><path d="M1 1h36v35H1z" fill="url(#metal)" stroke="#aaa"/><path d="M1 1h36v4H1z" fill="#44505c"/><path d="M10 15l5-5h14v15l-4 5H10z" fill="#58a24a" stroke="#1e5c18" stroke-width="1.400"/><path d="M10 15h15v15H10z" fill="#91c77d" stroke="#1e5c18"/><path d="M25 15l4-5" stroke="#1e5c18"/><use href="#cursor" x="26" y="0" width="13" height="22"/></svg><span class="whitespace-nowrap">查看器</span></button>
    </div>
    <h2 class="h-[22px] border-t border-[#b0ccc2] bg-linear-to-b from-[#bddfd2] to-[#defaf1] text-center">工作平面</h2>
  </section>

  <section class="flex w-[106px] shrink-0 flex-col border-r border-[#8e9a95] bg-white" aria-label="工具">
    <div class="grid h-24 grid-cols-[54px_47px] pt-1.5">
      <button class="flex flex-col items-center gap-[5px]"><svg width="38" height="38" viewBox="0 0 38 38"><path d="M1 10L14 0l5 2v26L6 38l-5-2z" fill="url(#green)" stroke="#2d6a2a" stroke-width="1.300"/><path d="M6 12L19 2v26L6 38z" fill="#6dae60" stroke="#2d6a2a"/><path d="M11 16l7-5v12l-7 5z" fill="#8cc080" stroke="#444"/><path d="M16 19h10" stroke="#111" stroke-width="2"/><path d="M14 19l5-4v8z" fill="#111"/><path d="M26 14l3-3h8v14l-4 4h-7z" fill="url(#metal)" stroke="#555" stroke-width="1.300"/></svg><span class="whitespace-nowrap">拾取<br>新主体</span></button>
      <button class="flex flex-col items-center gap-[5px]"><svg width="38" height="38" viewBox="0 0 38 38"><path d="M1 1h9v15H1zM22 28h15v9H22z" fill="url(#metal)"/><path d="M1 0v15M10 0v15M22 27h16M22 37h16" stroke="#444" stroke-width="1.500"/><path d="M1 16h9v11h11v10H1z" fill="#8ec8f0" stroke="#2474b5" stroke-width="1.500"/><path d="M1 37l9-10" stroke="#2474b5"/><use href="#pencil" x="13" y="5" width="19" height="19"/></svg><span>编辑<br>连接</span></button>
    </div>
    <h2 class="h-[22px] border-t border-[#b0ccc2] bg-linear-to-b from-[#bddfd2] to-[#defaf1] text-center">工具</h2>
  </section>

  <section class="flex w-[71px] shrink-0 flex-col bg-white" aria-label="选项">
    <div class="flex h-24 items-center pl-[7px]">
      <label class="flex items-center gap-[5px] pt-0.5 whitespace-nowrap"><input type="checkbox" class="size-[18px] appearance-none border border-[#aaa] bg-[#f0f0f0]">预览</label>
    </div>
    <h2 class="h-[22px] border-t border-[#b0ccc2] bg-linear-to-b from-[#bddfd2] to-[#defaf1] text-center">选项</h2>
  </section>
</div>

<!-- Options bar -->
<div class="flex h-[31px] shrink-0 items-end bg-[#d0e0da]">
  <input type="text" aria-label="偏移量" class="h-7 w-[52px] border border-[#808080] bg-white px-1 outline-none">
  <label class="ml-2 flex h-7 items-center gap-1 text-black"><input type="checkbox" class="size-4 appearance-none border border-[#333] bg-white">半径:</label>
  <input type="text" aria-label="半径" value="1000.0" disabled class="ml-2 h-7 w-[119px] border-2 border-b-0 border-[#e9efec] bg-[#d0e0da] px-0.5 pb-1 text-[#777]">
</div>

<main class="flex min-h-0 flex-1">
  <!-- Palettes -->
  <aside class="flex w-[97px] shrink-0 flex-col bg-[#f0f0f0] pr-1">
    <div class="flex h-[27px] shrink-0 items-center justify-end bg-[#bfcddb] pt-px pr-1.5">
      <button aria-label="关闭属性"><svg width="11" height="11"><path d="M1 1l9 9M10 1l-9 9" stroke="#000" stroke-width="2"/></svg></button>
    </div>
    <div class="mt-0.5 mr-0.5 flex flex-col border-t-2 border-r border-t-[#707070] border-r-white pb-0.5">
      <button class="flex h-[91px] items-center justify-end border-r-2 border-b-2 border-[#ccc] bg-linear-to-b from-white to-[#ebebeb] pt-0.5 pr-0.5 text-[#333]" aria-label="类型选择器"><svg class="h-[6px] w-[9px]"><use href="#caret"/></svg></button>
      <button class="flex h-[29px] items-center gap-1 pb-1 pl-0.5 text-black"><svg width="17" height="17" viewBox="0 0 17 17" fill="#f8f8f8" stroke="#333"><path d="M2 1h6v5H1zM9 1h6v5H8zM1 8h6v6H1zM8 8h7v6H8z"/><rect x="10" y="6" width="6" height="10" fill="#fff"/><path d="M11.500 8.500h3" stroke="#2a64b8" stroke-width="2.500"/></svg><span class="whitespace-nowrap">编辑类型</span></button>
      <div class="flex h-[222px]">
        <div class="flex w-[70px] flex-col overflow-hidden border-r border-dotted border-[#777] bg-white">
          <button class="flex h-6 shrink-0 justify-end bg-[#dadada] pt-1 pr-1.5" aria-label="折叠限制条件"><svg width="7" height="9" viewBox="0 0 7 9" fill="none" stroke="#000" stroke-width="1.500"><path d="M1 4l2.500-3L6 4M1 8l2.500-3L6 8"/></svg></button>
          <input type="text" aria-label="限制条件" class="h-6 w-full shrink-0 border border-l-0 border-black outline-none">
          <div class="h-6 shrink-0 border-b border-dotted border-[#777]"></div>
          <div class="h-6 shrink-0 border-b border-dotted border-[#777]"></div>
          <button class="flex h-6 shrink-0 justify-end bg-[#dadada] pt-1 pr-1.5" aria-label="折叠尺寸标注"><svg width="7" height="9" viewBox="0 0 7 9" fill="none" stroke="#000" stroke-width="1.500"><path d="M1 4l2.500-3L6 4M1 8l2.500-3L6 8"/></svg></button>
          <div class="h-6 shrink-0 border-b border-dotted border-[#777]"></div>
          <button class="flex h-6 shrink-0 justify-end bg-[#dadada] pt-1 pr-1.5" aria-label="折叠标识数据"><svg width="7" height="9" viewBox="0 0 7 9" fill="none" stroke="#000" stroke-width="1.500"><path d="M1 4l2.500-3L6 4M1 8l2.500-3L6 8"/></svg></button>
          <div class="h-6 shrink-0 border-b border-dotted border-[#777]"></div>
          <div class="h-6 shrink-0 border-b border-dotted border-[#777]"></div>
        </div>
        <div class="ml-px flex w-[19px] flex-col items-center bg-[#f0f0f0]">
          <button class="flex h-[21px] items-center" aria-label="向上滚动"><svg width="10" height="7" fill="none" stroke="#505050" stroke-width="2"><path d="M1 6l4-4 4 4"/></svg></button>
          <div class="h-[109px] w-full bg-[#cdcdcd]"></div>
          <button class="mt-auto flex h-[21px] items-center" aria-label="向下滚动"><svg width="10" height="7" fill="none" stroke="#505050" stroke-width="2"><path d="M1 1l4 4 4-4"/></svg></button>
        </div>
      </div>
      <button class="mt-px mr-px h-6 border border-l-0 border-[#bbb] bg-[#cccccc] pr-2 text-[#838383]">应用</button>
    </div>
    <div class="mt-1.5 flex h-[27px] shrink-0 items-center justify-end bg-[#bfcddb] pt-px pr-1.5">
      <button aria-label="关闭项目浏览器"><svg width="11" height="11"><path d="M1 1l9 9M10 1l-9 9" stroke="#000" stroke-width="2"/></svg></button>
    </div>
    <div class="mt-0.5 mr-0.5 flex flex-1 border-t-2 border-[#707070]">
      <div class="flex-1 bg-white"></div>
      <div class="flex w-[19px] flex-col items-center bg-[#f0f0f0]">
        <button class="flex h-[21px] items-center" aria-label="向上滚动"><svg width="10" height="7" fill="none" stroke="#505050" stroke-width="2"><path d="M1 6l4-4 4 4"/></svg></button>
        <div class="h-[72px] w-full bg-[#cdcdcd]"></div>
      </div>
    </div>
  </aside>

  <!-- Drawing area -->
  <div class="min-w-0 flex-1 overflow-hidden border-t-2 border-l-2 border-[#737373] bg-white">
    <svg class="block h-full w-full font-['Liberation_Sans',sans-serif] text-[13px]" role="img" aria-label="楼层平面 F1">
      <g transform="translate(-99 -205)">
        <path d="M99 205H2000V1200H1328V481H99z" fill="#dfdfdf"/>
        <g fill="none" stroke="#aaa" stroke-width="3">
          <path d="M99 481.500H1160M1328 516V1200M1328 542.500H2000M1328 603.500H2000M1328 664.500H2000M1328 725.500H2000"/>
        </g>

        <!-- Clipped column at the left edge -->
        <path d="M90 393h34v125H90z" fill="#aaa"/>
        <path d="M90 396h31l-9 9H90z" fill="url(#bt)"/>
        <path d="M121 396v119l-9-9V405z" fill="url(#br)"/>
        <path d="M90 506h22l9 9H90z" fill="url(#bb)"/>
        <path d="M90 408h19v95H90z" fill="#dfdfdf"/>
        <path d="M90 410h13q4 0 4 4v83q0 4-4 4H90z" fill="#aaa"/>
        <path d="M121 396l-9 9M112 506l9 9" stroke="#aaa" stroke-width="2"/>

        <!-- Rectangular column -->
        <path d="M304 393h186v125H304z" fill="#aaa"/>
        <path d="M307 396h180l-9 9H316z" fill="url(#bt)"/>
        <path d="M307 396l9 9v101l-9 9z" fill="url(#bl)"/>
        <path d="M487 396l-9 9v101l9 9z" fill="url(#br)"/>
        <path d="M307 515l9-9h162l9 9z" fill="url(#bb)"/>
        <path d="M307 396l9 9M487 396l-9 9M307 515l9-9M487 515l-9-9" stroke="#aaa" stroke-width="2"/>
        <path d="M319 408h156v95H319z" fill="#dfdfdf"/>
        <rect x="326" y="415" width="142" height="81" fill="#dfdfdf" stroke="#aaa" stroke-width="10" stroke-linejoin="round"/>
        <rect x="341" y="430" width="112" height="51" rx="5" fill="#ffffa9"/>
        <path d="M351 440h92v31h-92z" fill="#f5f5f5"/>
        <path d="M351 468l28-28M420 471l23-26M370 470h3" stroke="#aaa" stroke-width="2.500"/>

        <!-- L-shaped column -->
        <path d="M1157 393h61v-61h125v186h-186z" fill="#aaa"/>
        <path d="M1160 396h61l9 9h-61z" fill="url(#bt)"/>
        <path d="M1221 335h119l-9 9h-101z" fill="url(#bt)"/>
        <path d="M1221 335l9 9v61l-9-9z" fill="url(#bl)"/>
        <path d="M1160 396l9 9v101l-9 9z" fill="url(#bl)"/>
        <path d="M1340 335l-9 9v162l9 9z" fill="url(#br)"/>
        <path d="M1160 515l9-9h162l9 9z" fill="url(#bb)"/>
        <path d="M1160 396l9 9M1221 335l9 9M1221 396l9 9M1340 335l-9 9M1160 515l9-9M1340 515l-9-9" stroke="#aaa" stroke-width="2"/>
        <path d="M1172 408h61v-61h95v156h-156z" fill="#dfdfdf"/>
        <path d="M1179 415h61v-61h82v142h-143z" fill="#dfdfdf" stroke="#aaa" stroke-width="10" stroke-linejoin="round"/>
        <rect x="1195" y="430" width="111" height="51" rx="5" fill="#ffffa9"/>
        <path d="M1205 440h91v31h-91z" fill="#f5f5f5"/>
        <path d="M1209 471l32-31M1281 471l15-17M1286 464h10M1286 470h3M1211 451h3M1207 460h2M1226 451h3M1265 446h3M1243 443h2" stroke="#aaa" stroke-width="2.500"/>

        <!-- Grid lines -->
        <g fill="none" stroke="#ffa8a8" stroke-width="2">
          <path d="M128 455H387M452 455H487M1163 455H1291M1355 455H1421M1484 455H1517"/>
          <path d="M128 699H387M452 699H517M581 699H839M903 699H968M1033 699H1291M1355 699H1421M1484 699H1517"/>
          <path d="M366 205V459M366 522V587M366 652V773"/>
        </g>
        <path d="M313 455.500H452" stroke="#60b4d8" stroke-dasharray="9 8"/>
        <path d="M1280.500 205V773" stroke="#6fc0e0" stroke-width="1.500" stroke-dasharray="9 7"/>
        <path d="M1280.500 261V519M1280.500 583V649M1280.500 713V780" stroke="#6672bd" stroke-width="4" stroke-linecap="round"/>
        <path d="M1280.500 261V519M1280.500 583V649M1280.500 713V780" stroke="#3d6dc4" stroke-width="2" stroke-dasharray="9 7"/>

        <!-- Railing path -->
        <path d="M489 455.500H1161" stroke="#f0f" stroke-width="5" stroke-linecap="round"/>
        <path d="M491 455.500H1161" stroke="#ef7cf2" stroke-dasharray="10 6"/>

        <!-- Temporary dimensions -->
        <g fill="none" stroke="#82a4ff">
          <path d="M488 383.500H1159M488.500 374V424M1159.500 374V424M482 390l13-13M1153 390l13-13"/>
          <path d="M366 398.500H489M366.500 372V408M360 405l13-13M482 405l13-13"/>
          <path d="M404 432.500H441M404 473.500H441M431.500 428V478M425 427l13 13M425 448l13 13M425 466l13 13"/>
          <path d="M1503.500 473V773M1477 473.500H1517M1497 467l13 13" stroke="#9aa8d4"/>
        </g>
        <g fill="#0a3ba8">
          <text x="823" y="377" text-anchor="middle">3300.0</text>
          <text x="426" y="392" text-anchor="middle">600.0</text>
          <text transform="translate(424 477) rotate(-90)">90.0</text>
          <text transform="translate(424 457) rotate(-90)">110.0</text>
          <text transform="translate(1496 736) rotate(-90)" fill="#86a4f0" class="text-[14px]">2400.</text>
        </g>
        <g fill="#5ba0e6" stroke="#3d5878" stroke-width="1.200">
          <circle cx="366.500" cy="384.500" r="3"/><circle cx="488.500" cy="410.500" r="3"/><circle cx="417.500" cy="432.500" r="3"/><circle cx="417.500" cy="473.500" r="3"/><circle cx="443.500" cy="455.500" r="3"/>
        </g>
        <use href="#flip" x="817" y="397" width="14" height="10"/>
        <use href="#flip" x="420" y="411" width="14" height="10"/>
        <use href="#flip" x="442" y="440" width="14" height="10"/>

        <path d="M704 485L731 458" stroke="#444"/>
        <path d="M691.500 489.500h11v8h-11z" fill="#9fe4f5" stroke="#0b2f6b"/>
        <path d="M699.500 489v-4.500q0-1 1-1h4q1 0 1 1v5" fill="none" stroke="#0b2f6b"/>
        <path d="M701 487h3v2h-3z" fill="#0b2f6b"/>
      </g>
    </svg>
  </div>
</main>

<!-- Annotation arrows laid over the window -->
<svg class="pointer-events-none absolute inset-0 h-full w-full" aria-hidden="true">
  <g fill="#fb3a3a">
    <path d="M743 293L857 95l-5-2L872 79l1 24-6-2L745 294z"/>
    <path d="M610 697L775 469l-5-4L789 454l-1 24-6-4L612 698z"/>
  </g>
</svg>
</body>
</html>
